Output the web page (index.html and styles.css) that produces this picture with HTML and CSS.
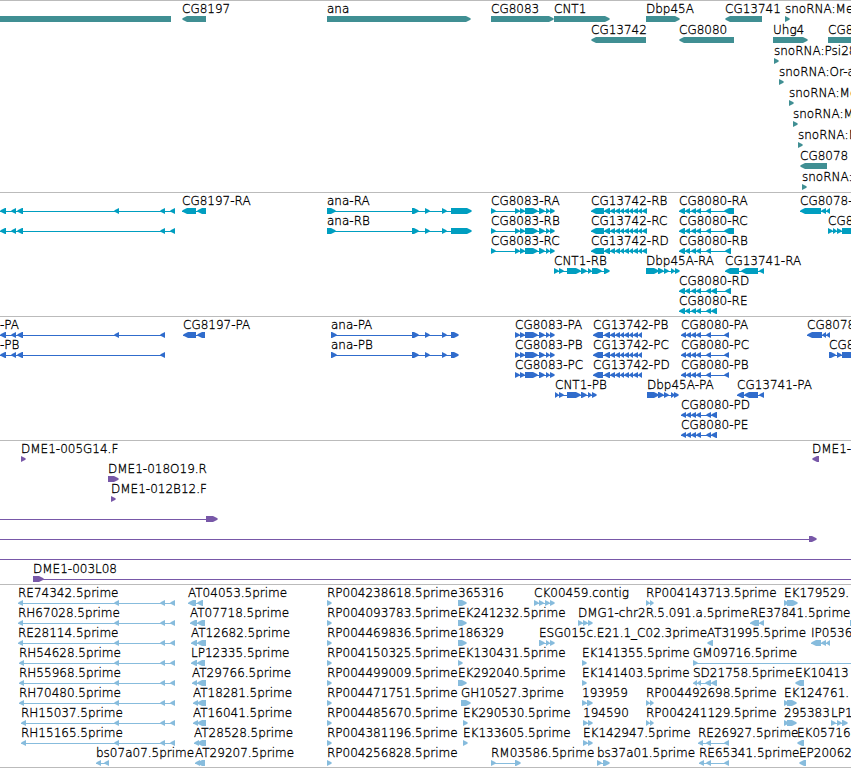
FILE: index.html
```html
<!DOCTYPE html>
<html lang="en">
<head>
    <meta charset="UTF-8">
    <title>Genome browser</title>
    <link rel="stylesheet" href="styles.css">
</head>
<body>

<main id="browser">
    <section class="track genes" id="genes" aria-label="Genes"></section>
    <section class="track transcripts" id="transcripts" aria-label="Transcripts"></section>
    <section class="track proteins" id="proteins" aria-label="Proteins"></section>
    <section class="track clones" id="clones" aria-label="Clones"></section>
    <section class="track ests" id="ests" aria-label="ESTs"></section>
</main>

<script src="tracks.js"></script>
</body>
</html>
```
FILE: styles.css
```css
body {
    margin: 0;
    background: #fff;
    color: #000;
    font-family: "DejaVu Sans", sans-serif;
    font-weight: 200;
    font-size: 12px;
    -webkit-text-stroke: 0.3px #000;
    overflow: hidden;
}
#browser {
    overflow: hidden;
    border-bottom: 1px solid #bbb;
}
.track {
    border-top: 1px solid #bbb;
    padding-bottom: 3px;
}
.row {
    position: relative;
    height: 20px;
}
.genes .row { height: 21px; }
.genes, .ests { padding-bottom: 2px; }

/* features lie on the sequence at their own position */
.feature {
    position: absolute;
    top: 0;
    white-space: nowrap;
}
.label {
    display: block;
    height: 15px;
    line-height: 17px;
}
.glyph {
    display: block;
    height: 6px;
    overflow: visible;
}
.genes .glyph { fill: #408f93; }
.transcripts .glyph { fill: #009ec0; }
.proteins .glyph { fill: #306ccc; }
.clones .glyph { fill: #7858a8; }
.ests .glyph { fill: #87bcdd; }
```
FILE: tracks.js
```js
// one feature: [label, strand, segments, line end]
// segments are "start-end" pairs, the label begins at the first one
var ana = '412-419 425-430 442-447 ';
var cg8083 = '515-520 520-525 525-538 539-545 546-550 550-555';
var cg13742 = ' 604-610 610-615 615-620 620-624 624-629 629-633 633-638 638-642';
var cg8080 = '679-685 685-690 691-696 696-701 706-711';
var cg8080p = '681-686 686-691 691-696 696-701 706-711';
var est = ' 114-119 160-165 170-175';

var tracks = {
    genes: [
        [['', '-', '0-171'], ['CG8197', '-', '182-206'], ['ana', '+', '327-471'], ['CG8083', '+', '491-554'],
         ['CNT1', '+', '554-610'], ['Dbp45A', '+', '646-680'], ['CG13741', '-', '725-762'], ['snoRNA:Me', '+', '785-790']],
        [['CG13742', '-', '591-646'], ['CG8080', '-', '679-734'], ['Uhg4', '+', '773-808'], ['CG8', '+', '828-870']],
        [['snoRNA:Psi28', '+', '774-779']],
        [['snoRNA:Or-a', '+', '779-784']],
        [['snoRNA:Me', '+', '789-794']],
        [['snoRNA:M', '+', '793-798']],
        [['snoRNA:M', '+', '798-803']],
        [['CG8078', '-', '800-827']],
        [['snoRNA:', '+', '802-807']]
    ],
    transcripts: [
        [['', '-', '0-6 11-16 17-23' + est], ['CG8197-RA', '-', '182-196 197-206'],
         ['ana-RA', '+', '327-336 ' + ana + '451-472'], ['CG8083-RA', '+', '491-496 ' + cg8083],
         ['CG13742-RB', '-', '591-604' + cg13742 + ' 642-647'], ['CG8080-RA', '-', cg8080 + ' 724-734'],
         ['CG8078-', '-', '800-821 821-826 826-830']],
        [['', '-', '0-6 11-16 17-23 160-165 170-175'],
         ['ana-RB', '+', '327-336 ' + ana + '451-472'], ['CG8083-RB', '+', '491-496 ' + cg8083],
         ['CG13742-RC', '-', '591-604' + cg13742 + ' 642-647'], ['CG8080-RC', '-', cg8080 + ' 724-734'],
         ['CG8', '+', '828-833 833-837 837-842 842-870']],
        [['CG8083-RC', '+', '491-496 ' + cg8083], ['CG13742-RD', '-', '591-604' + cg13742 + ' 642-647'],
         ['CG8080-RB', '-', cg8080 + ' 725-731']],
        [['CNT1-RB', '+', '554-559 559-564 567-581 581-587 588-592 592-602 604-610'],
         ['Dbp45A-RA', '+', '646-659 658-664 664-669 671-675 675-680'],
         ['CG13741-RA', '-', '725-739 741-758 759-764']],
        [['CG8080-RD', '-', cg8080 + ' 711-717 725-731']],
        [['CG8080-RE', '-', cg8080 + ' 711-717']]
    ],
    proteins: [
        [['-PA', '-', '0-6 11-16 17-23 114-119 160-165'], ['CG8197-PA', '-', '183-196 197-205'],
         ['ana-PA', '+', '331-337 ' + ana + '451-459'], ['CG8083-PA', '+', cg8083],
         ['CG13742-PB', '-', '593-603' + cg13742], ['CG8080-PA', '-', cg8080p + ' 724-729'],
         ['CG8078', '-', '807-822 822-826 826-830']],
        [['-PB', '-', '0-6 11-16 17-23 160-165'],
         ['ana-PB', '+', '331-337 ' + ana + '451-459'], ['CG8083-PB', '+', cg8083],
         ['CG13742-PC', '-', '593-603' + cg13742], ['CG8080-PC', '-', cg8080p + ' 724-729'],
         ['CG8', '+', '829-836 837-842 842-870']],
        [['CG8083-PC', '+', cg8083], ['CG13742-PD', '-', '593-603' + cg13742],
         ['CG8080-PB', '-', cg8080p + ' 724-729']],
        [['CNT1-PB', '+', '555-559 559-564 567-581 581-587 588-592 592-597'],
         ['Dbp45A-PA', '+', '647-659 658-664 664-669 671-675 674-679'],
         ['CG13741-PA', '-', '737-744 744-758 759-764']],
        [['CG8080-PD', '-', cg8080p + ' 711-717']],
        [['CG8080-PE', '-', cg8080p + ' 711-717']]
    ],
    clones: [
        [['DME1-005G14.F', '+', '21-26'], ['DME1-', '-', '812-819']],
        [['DME1-018O19.R', '+', '108-119']],
        [['DME1-012B12.F', '+', '111-116']],
        [['', '+', '0-0 206-218']],
        [['', '+', '0-0 809-817']],
        [['', '+', '0-0', 2000]],
        [['DME1-003L08', '+', '33-44', 2000]]
    ],
    ests: [
        [['RE74342.5prime', '-', '18-23' + est], ['AT04053.5prime', '-', '188-196 197-203'],
         ['RP004238618.5prime', '+', '327-332'], ['365316', '+', '458-467'],
         ['CK00459.contig', '+', '534-539 539-544 545-550 550-555'],
         ['RP004143713.5prime', '+', '646-650 650-654'], ['EK179529.', '+', '784-789 787-798']],
        [['RH67028.5prime', '-', '18-23' + est], ['AT07718.5prime', '-', '190-197 197-205'],
         ['RP004093783.5prime', '+', '327-332'], ['EK241232.5prime', '+', '458-467'],
         ['DMG1-chr2R.5.091.a.5prime', '+', '578-583 583-588 588-593'],
         ['RE37841.5prime', '-', '750-759 759-764'], ['', '+', '850-860']],
        [['RE28114.5prime', '-', '18-23' + est], ['AT12682.5prime', '-', '191-197 197-206'],
         ['RP004469836.5prime', '+', '327-332'], ['186329', '+', '458-467'],
         ['ESG015c.E21.1_C02.3prime', '+', '539-545 546-550 550-555'],
         ['AT31995.5prime', '-', '707-713'], ['IP0536', '-', '811-821 821-826 826-830']],
        [['RH54628.5prime', '-', '19-24' + est], ['LP12335.5prime', '-', '191-197 197-205'],
         ['RP004150325.5prime', '+', '327-332'], ['EK130431.5prime', '+', '458-463'],
         ['EK141355.5prime', '+', '582-587'], ['GM09716.5prime', '+', '693-698', 2000]],
        [['RH55968.5prime', '-', '19-24' + est], ['AT29766.5prime', '-', '192-197 197-206'],
         ['RP004499009.5prime', '+', '327-332'], ['EK292040.5prime', '+', '458-467'],
         ['EK141403.5prime', '+', '582-587'], ['SD21758.5prime', '-', '693-697 697-701 705-711 711-717'],
         ['EK10413', '-', '795-804']],
        [['RH70480.5prime', '-', '19-24' + est], ['AT18281.5prime', '-', '193-198 197-206'],
         ['RP004471751.5prime', '+', '327-332'], ['GH10527.3prime', '+', '461-471'],
         ['193959', '+', '582-587 587-593'], ['RP004492698.5prime', '+', '646-650 650-654'],
         ['EK124761.', '+', '784-789 787-797']],
        [['RH15037.5prime', '-', '21-26' + est], ['AT16041.5prime', '-', '193-198 197-206'],
         ['RP004485670.5prime', '+', '327-332'], ['EK290530.5prime', '+', '463-468'],
         ['194590', '+', '583-588 588-593'], ['RP004241129.5prime', '+', '646-650 650-654'],
         ['295383', '+', '784-789 787-797'], ['LP1', '+', '831-836 837-842 842-848']],
        [['RH15165.5prime', '-', '21-26' + est], ['AT28528.5prime', '-', '194-199 197-206'],
         ['RP004381196.5prime', '+', '327-332'], ['EK133605.5prime', '+', '463-468'],
         ['EK142947.5prime', '+', '583-588 588-593'], ['RE26927.5prime', '-', '698-703 706-711 724-729'],
         ['EK05716', '-', '797-804']],
        [['bs07a07.5prime', '-', '96-101 104-109'], ['AT29207.5prime', '-', '195-200 197-205'],
         ['RP004256828.5prime', '+', '327-332'], ['RM03586.5prime', '+', '491-496 515-521'],
         ['bs37a01.5prime', '+', '597-602 603-610'], ['RE65341.5prime', '-', '699-704 706-711 724-729'],
         ['EP20062', '-', '799-806']]
    ]
};

var SVG = 'http://www.w3.org/2000/svg';
var HEAD = 5; // length of an arrow head

function segmentPoints(a, b, strand) {
    var head = Math.min(HEAD, b - a);
    if (head == 0 || (strand == '-' && a == 0 && b > 150)) {
        return [a, 0, b, 0, b, 6, a, 6].join(' ');
    }
    if (strand == '+') {
        return [a, 0, b - head, 0, b - 1, 2, b, 3, b - 1, 4, b - head, 6, a, 6].join(' ');
    }
    return [b, 0, a + head, 0, a + 1, 2, a, 3, a + 1, 4, a + head, 6, b, 6].join(' ');
}

function drawFeature(row, data) {
    var segments = data[2].split(' ').map(function(s) {
        return s.split('-').map(Number);
    });
    var start = segments[0][0];
    var end = data[3] || segments[segments.length - 1][1];

    var feature = document.createElement('div');
    feature.className = 'feature';
    feature.style.left = start + 'px';

    var label = document.createElement('span');
    label.className = 'label';
    label.textContent = data[0];
    feature.appendChild(label);

    var svg = document.createElementNS(SVG, 'svg');
    svg.setAttribute('class', 'glyph');
    svg.setAttribute('width', end - start);
    svg.setAttribute('height', 6);
    if (segments.length > 1 || data[3]) {
        var line = document.createElementNS(SVG, 'rect');
        line.setAttribute('y', 3);
        line.setAttribute('width', end - start - 2);
        line.setAttribute('height', 1);
        svg.appendChild(line);
    }
    segments.forEach(function(s) {
        var shape = document.createElementNS(SVG, 'polygon');
        shape.setAttribute('points', segmentPoints(s[0] - start, s[1] - start, data[1]));
        svg.appendChild(shape);
    });
    feature.appendChild(svg);
    row.appendChild(feature);
}

for (var name in tracks) {
    var track = document.getElementById(name);
    tracks[name].forEach(function(features) {
        var row = document.createElement('div');
        row.className = 'row';
        features.forEach(function(data) {
            drawFeature(row, data);
        });
        track.appendChild(row);
    });
}
```
